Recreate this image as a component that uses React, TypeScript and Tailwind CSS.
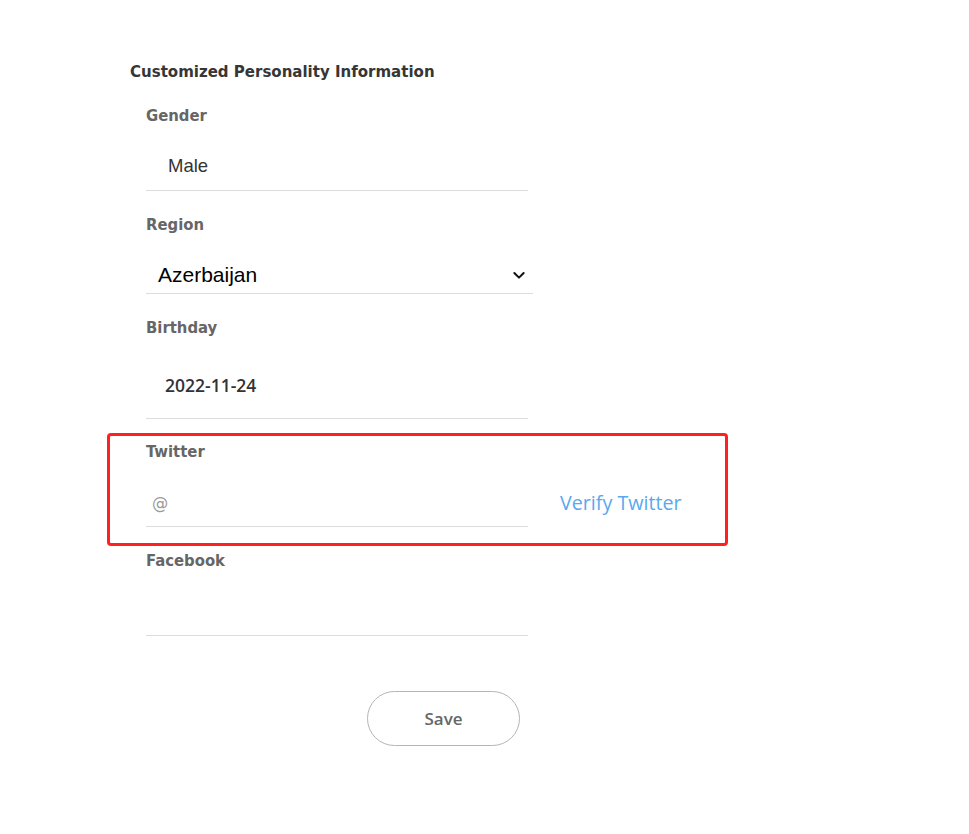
import React from "react";

const din = "font-['DejaVu_Sans_Condensed','DejaVu_Sans',sans-serif]";
const body = "font-['Open_Sans','Noto_Sans',sans-serif]";

const Label: React.FC<{ text: string }> = ({ text }) => (
  <div className={`h-6 leading-6 text-[16.5px] font-bold text-[#666] ${din}`}>{text}</div>
);

export default function App() {
  return (
    <div className="min-h-[834px] w-full bg-white">
      <div className="pl-[130px] pt-[59px]">
        <h2 className={`h-6 leading-6 text-[16.7px] font-bold text-[#363636] ${din}`}>
          Customized Personality Information
        </h2>

        <div className="pl-4 mt-[21px]">
          {/* Gender */}
          <Label text="Gender" />
          <div className="mt-[14px] h-[49px] w-[382px] border-b border-[#dcdcdc] flex items-center pl-[22px]">
            <span className="text-[18.5px] text-[#333] font-['Liberation_Sans',Arial,sans-serif]">Male</span>
          </div>

          {/* Region */}
          <div className="mt-[22px]">
            <Label text="Region" />
            <div className="mt-[19px] h-[38px] w-[387px] border-b border-[#dcdcdc] flex items-center justify-between pl-3 pr-[6px]">
              <span className="text-[21px] text-black font-['Liberation_Sans',Arial,sans-serif]">Azerbaijan</span>
              <svg width="16" height="16" viewBox="0 0 24 24" fill="none" stroke="#111" strokeWidth="3" strokeLinecap="round" strokeLinejoin="round">
                <path d="M5 9l7 7 7-7" />
              </svg>
            </div>
          </div>

          {/* Birthday */}
          <div className="mt-[22px]">
            <Label text="Birthday" />
            <div className="mt-[13px] h-[66px] w-[382px] border-b border-[#dcdcdc] flex items-center pl-[19px]">
              <span className={`text-[17.5px] font-semibold text-[#333] ${body}`}>2022-11-24</span>
            </div>
          </div>

          {/* Twitter */}
          <div className="relative mt-[21px]">
            <div className="absolute left-[-39px] top-[-7px] w-[621px] h-[113px] border-[3px] border-[#ff2020] rounded-[4px] pointer-events-none" />
            <Label text="Twitter" />
            <div className="flex items-center">
              <div className="mt-[14px] h-[49px] w-[382px] border-b border-[#dcdcdc] flex items-center pl-[6px]">
                <span className={`text-[18px] text-[#9a9a9a] ${din}`}>@</span>
              </div>
              <span className={`ml-[32px] mt-[14px] text-[19.7px] text-[#5aa8ef] ${body}`}>Verify Twitter</span>
            </div>
          </div>

          {/* Facebook */}
          <div className="mt-[22px]">
            <Label text="Facebook" />
            <div className="mt-[14px] h-[49px] w-[382px] border-b border-[#dcdcdc]" />
          </div>
        </div>

        <button className={`mt-[55px] ml-[237px] h-[55px] w-[153px] rounded-full border border-[#b5b5b5] bg-white text-[17px] font-semibold text-[#666] ${body}`}>
          Save
        </button>
      </div>
    </div>
  );
}
